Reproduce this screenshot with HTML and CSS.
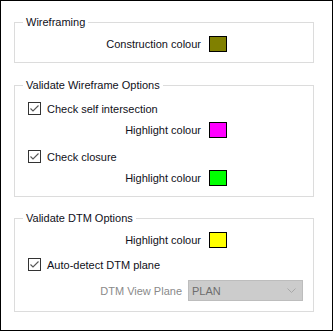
FILE: index.html
```html
<!DOCTYPE html>
<html lang="en">
<head>
    <meta charset="UTF-8">
    <link rel="stylesheet" href="styles.css">
    <title>Validate Options</title>
</head>
<body>
    <div class="panel">
        <fieldset class="group group-wire">
            <legend>Wireframing</legend>
            <div class="colour-row">
                <span>Construction colour</span>
                <span class="swatch olive"></span>
            </div>
        </fieldset>

        <fieldset class="group group-validate">
            <legend>Validate Wireframe Options</legend>
            <label class="check-row first">
                <span class="check"><svg width="11" height="11" viewBox="0 0 11 11"><path d="M1.5 5.5 L4 8 L9.5 2.5" fill="none" stroke="#555" stroke-width="1.1"/></svg></span>
                Check self intersection
            </label>
            <div class="colour-row">
                <span>Highlight colour</span>
                <span class="swatch magenta"></span>
            </div>
            <label class="check-row">
                <span class="check"><svg width="11" height="11" viewBox="0 0 11 11"><path d="M1.5 5.5 L4 8 L9.5 2.5" fill="none" stroke="#555" stroke-width="1.1"/></svg></span>
                Check closure
            </label>
            <div class="colour-row">
                <span>Highlight colour</span>
                <span class="swatch green"></span>
            </div>
        </fieldset>

        <fieldset class="group group-dtm">
            <legend>Validate DTM Options</legend>
            <div class="colour-row">
                <span>Highlight colour</span>
                <span class="swatch yellow"></span>
            </div>
            <label class="check-row">
                <span class="check"><svg width="11" height="11" viewBox="0 0 11 11"><path d="M1.5 5.5 L4 8 L9.5 2.5" fill="none" stroke="#555" stroke-width="1.1"/></svg></span>
                Auto-detect DTM plane
            </label>
            <div class="select-row">
                <span class="muted">DTM View Plane</span>
                <div class="select">
                    <span>PLAN</span>
                    <svg width="9" height="5" viewBox="0 0 9 5"><path d="M0.5 0.5 L4.5 4.5 L8.5 0.5" fill="none" stroke="#a8a8a8" stroke-width="1"/></svg>
                </div>
            </div>
        </fieldset>
    </div>
</body>
</html>
```

FILE: styles.css
```css
body {
    margin: 0;
    padding: 0;
    background-color: #fff;
    font-family: "Liberation Sans", Arial, sans-serif;
    font-size: 11px;
    color: #101020;
}

.panel {
    width: 333px;
    height: 331px;
    box-sizing: border-box;
    border: 1px solid #000;
    padding: 0 18px 0 13px;
}

.group {
    margin: 14px 0 0 0;
    padding: 0 0 10px 13px;
    border: 1px solid #dcdcdc;
    min-width: 0;
}

.group legend {
    margin-left: -5px;
    padding: 0 3px;
    line-height: 15px;
}

.group-validate {
    margin-top: 15px;
}

.colour-row {
    display: flex;
    justify-content: flex-end;
    align-items: center;
    gap: 8px;
    height: 16px;
    margin: 6px 86px 0 0;
}

.swatch {
    width: 16px;
    height: 14px;
    border: 1px solid #000;
}

.olive { background-color: #808000; }
.magenta { background-color: #ff00ff; }
.green { background-color: #00ff00; }
.yellow { background-color: #ffff00; }

.check-row {
    display: flex;
    align-items: center;
    gap: 6px;
    height: 15px;
    margin-top: 11px;
}

.check-row.first {
    margin-top: 8px;
}

.group-dtm .check-row {
    margin-top: 9px;
}

.check {
    display: flex;
    align-items: center;
    justify-content: center;
    width: 11px;
    height: 11px;
    border: 1px solid #333;
    background-color: #fff;
}

.select-row {
    display: flex;
    justify-content: flex-end;
    align-items: center;
    gap: 6px;
    margin: 8px 10px 0 0;
}

.muted {
    color: #8a8a8a;
}

.select {
    display: flex;
    align-items: center;
    justify-content: space-between;
    width: 112px;
    height: 19px;
    padding: 0 6px 0 3px;
    box-sizing: border-box;
    width: 115px;
    height: 21px;
    background-color: #cccccc;
    border: 1px solid #bdbdbd;
    color: #6d6d6d;
}
```
